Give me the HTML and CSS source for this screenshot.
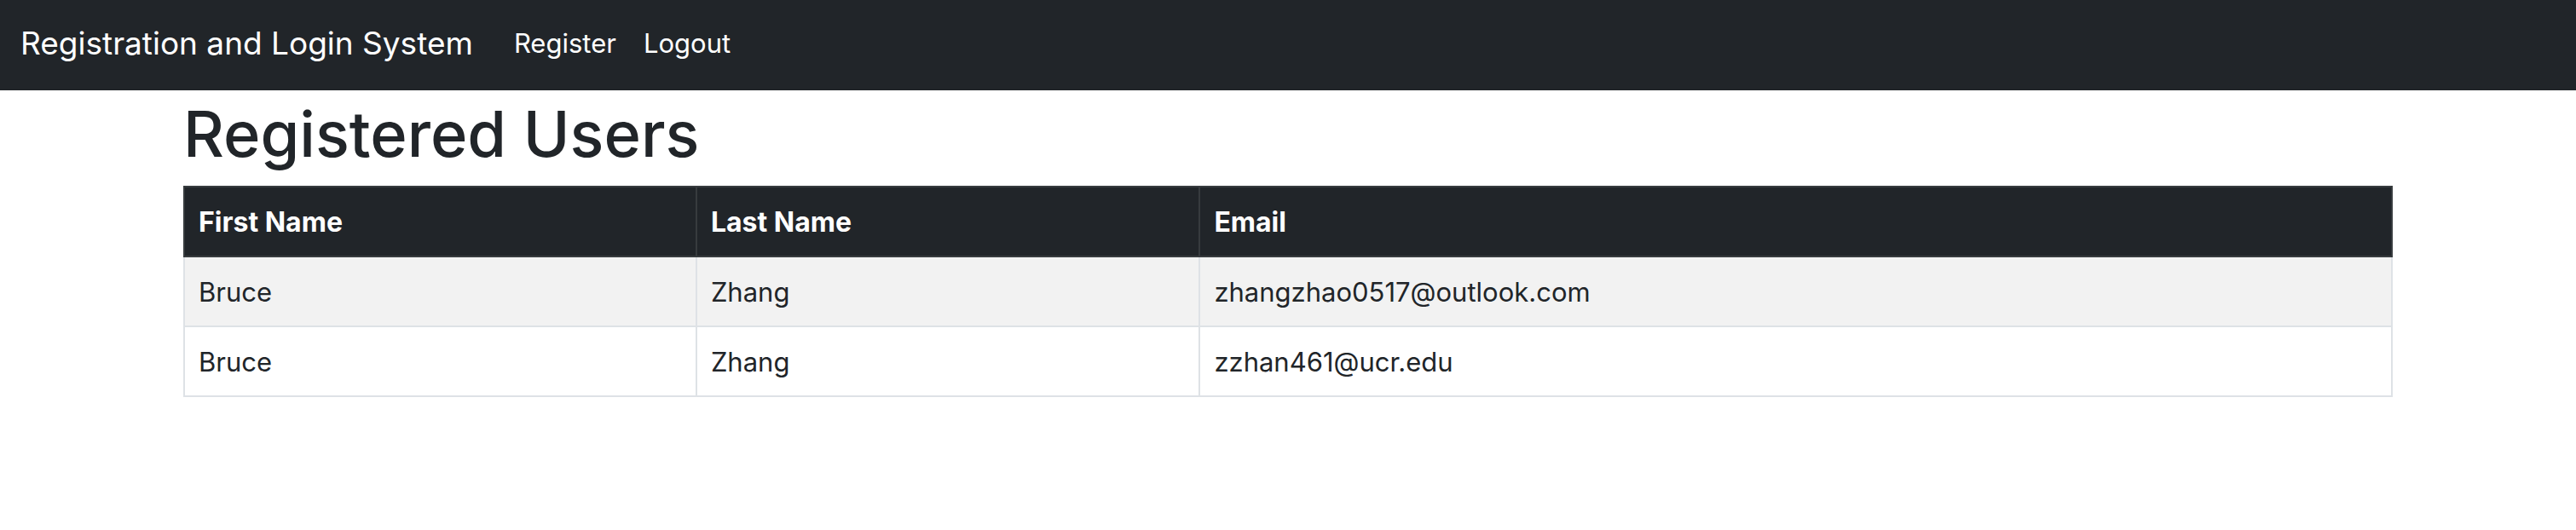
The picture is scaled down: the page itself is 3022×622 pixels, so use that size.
FILE: index.html
```html
<!DOCTYPE html>
<html lang="en">
<head>
<meta charset="utf-8">
<title>Registration and Login System</title>
<link rel="stylesheet" href="styles.css">
</head>
<body>
<nav class="navbar">
  <a class="brand" href="#">Registration and Login System</a>
  <ul class="nav">
    <li><a class="nav-link" href="#">Register</a></li>
    <li><a class="nav-link" href="#">Logout</a></li>
  </ul>
</nav>
<main class="container">
  <h1 class="title">Registered Users</h1>
  <table class="users">
    <colgroup>
      <col class="col-first">
      <col class="col-last">
      <col>
    </colgroup>
    <thead>
      <tr><th scope="col">First Name</th><th scope="col">Last Name</th><th scope="col">Email</th></tr>
    </thead>
    <tbody>
      <tr><td>Bruce</td><td>Zhang</td><td>zhangzhao0517@outlook.com</td></tr>
      <tr><td>Bruce</td><td>Zhang</td><td>zzhan461@ucr.edu</td></tr>
    </tbody>
  </table>
</main>
</body>
</html>
```

FILE: styles.css
```css
* { box-sizing: border-box; }
body {
  margin: 0;
  background: #fff;
  color: #212529;
  font-family: Inter, "Liberation Sans", sans-serif;
  font-size: 31px;
  line-height: 48px;
}
.navbar {
  display: flex;
  align-items: center;
  padding: 11px 24px 15px;
  background: #212529;
}
.brand {
  margin-right: 32px;
  padding: 10px 0;
  color: #fff;
  font-size: 37px;
  line-height: 60px;
  text-decoration: none;
}
.nav {
  display: flex;
  margin: 0;
  padding: 0;
  list-style: none;
}
.nav-link {
  display: block;
  padding: 16px;
  color: #fff;
  text-decoration: none;
}
.container {
  width: 100%;
  max-width: 2640px;
  margin: 0 auto;
  padding: 0 24px;
}
.title {
  margin: 0 0 13px;
  padding-top: 3px;
  font-size: 74px;
  font-weight: 500;
  line-height: 96px;
}
.users {
  width: 100%;
  border-collapse: collapse;
  text-align: left;
}
.col-first { width: 23.2%; }
.col-last { width: 22.8%; }
.users th, .users td {
  padding: 17px 16px 15px;
  border: 2px solid #dee2e6;
}
.users th {
  border-color: #373b3e;
  background: #212529;
  color: #fff;
  font-size: 32px;
  font-weight: 700;
}
.users tbody tr:nth-child(odd) { background: #f2f2f2; }
```
